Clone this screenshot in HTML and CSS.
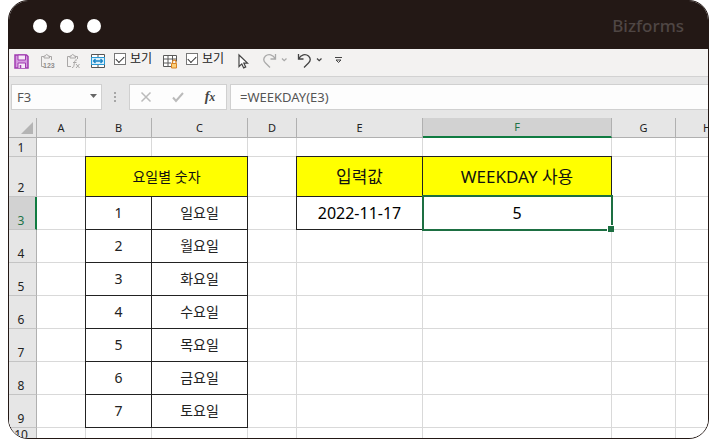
FILE: index.html
```html
<!doctype html>
<html lang="ko">
  <head>
    <meta charset="UTF-8" />
    <meta name="viewport" content="width=device-width, initial-scale=1.0" />
    <title>WEEKDAY | Bizforms</title>
    <link rel="stylesheet" href="styles.css">
  </head>

  <body>
    <div class="window">
      <header class="titlebar">
        <div class="lights">
          <span></span>
          <span></span>
          <span></span>
        </div>
        <div class="brand">Bizforms</div>
      </header>

      <div class="toolbar">
        <button aria-label="저장">
          <svg width="16" height="16" viewBox="0 0 16 16" fill="none">
            <path d="M1 2h11.500l1.500 1.500V15H1z" fill="#d59be0" stroke="#a03bb0" stroke-width="1.500" />
            <path d="M4 2h7.500v5H4z" fill="#f6e9f8" stroke="#a03bb0" />
            <path d="M4 15v-5h7.500v5" fill="#f6e9f8" stroke="#a03bb0" />
            <path d="M6.500 12v3" stroke="#a03bb0" stroke-width="1.500" />
          </svg>
        </button>
        <button aria-label="값 붙여넣기">
          <svg width="16" height="16" viewBox="0 0 16 16" fill="none" stroke="#a9a7a6">
            <path d="M5 13.500H2.500v-10H5M10 3.500h2.500V7" />
            <path d="M5 5V3h1.500c0-2 2.500-2 2.500 0h1.500v2z" />
            <text class="digits" x="4" y="15">123</text>
          </svg>
        </button>
        <button aria-label="수식 붙여넣기">
          <svg width="16" height="16" viewBox="0 0 16 16" fill="none" stroke="#a9a7a6">
            <path d="M7 13.500H3.500v-10H6M11 3.500h2.500V6" />
            <path d="M6 5V3h1.500c0-2 2.500-2 2.500 0h1.500v2z" />
            <path d="M13 7c-2-.6-2.300 1-2.700 3.500S9.700 15 8 14.500M9 9.500h3.500M12 11l3.500 4M15.500 11L12 15" />
          </svg>
        </button>
        <button aria-label="병합하고 가운데 맞춤">
          <svg width="16" height="16" viewBox="0 0 16 16" fill="none">
            <path d="M2.500 1.500h13v13h-13z" fill="#fff" stroke="#555" />
            <path d="M9 1v4M9 12v3" stroke="#555" />
            <path d="M2.500 4.500h13v7h-13z" fill="#d9effb" stroke="#2b9bd6" />
            <path d="M4.500 8h9M6.500 6l-2 2 2 2M11.500 6l2 2-2 2" stroke="#1b84c4" stroke-width="1.300" />
          </svg>
        </button>
        <label class="check"><input type="checkbox" checked />보기</label>
        <button aria-label="시트 보호">
          <svg width="16" height="16" viewBox="0 0 16 16" fill="none">
            <path d="M2.500 2.500h13v11h-13zM2.500 6h13M2.500 10h13M7 2.500v11M11.500 2.500v11" fill="#fff" stroke="#5a5a5a" />
            <path d="M10 8.500h6V16h-6z" fill="#f3f2f1" />
            <path d="M11.500 10.500V9c0-2.500 3.500-2.500 3.500 0v1.500" stroke="#d98324" stroke-width="1.200" />
            <path d="M10.500 10.500h5v4.500h-5z" fill="#fbcf7a" stroke="#d98324" />
          </svg>
        </button>
        <label class="check"><input type="checkbox" checked />보기</label>
        <button aria-label="개체 선택">
          <svg width="20" height="16" viewBox="0 0 20 16" fill="none" stroke="#444" stroke-width="1.200">
            <path d="M6 2v11.500l2.800-2.600 1.900 4 2-1-1.900-3.800H14.500z" fill="#fff" />
          </svg>
        </button>
        <button aria-label="다시 실행">
          <svg width="26" height="16" viewBox="0 0 26 16" fill="none" stroke="#aaa" stroke-width="1.300">
            <path d="M13.500 1v5h-5M13.300 5.800C11 1.500 6.500.3 3.500 3 1 5.500 1.500 8 3.500 10L8 14.500" />
            <path d="M20 5.500l2.200 2.200L24.500 5.500" />
          </svg>
        </button>
        <button aria-label="실행 취소">
          <svg width="26" height="16" viewBox="0 0 26 16" fill="none" stroke="#444" stroke-width="1.300">
            <path d="M1.500 1v5h5M1.700 5.800C4 1.500 8.500.3 11.500 3 14 5.500 13.500 8 11.500 10L7 14.500" />
            <path d="M20 5.500l2.200 2.200L24.500 5.500" />
          </svg>
        </button>
        <button aria-label="빠른 실행 도구 모음 사용자 지정">
          <svg width="14" height="16" viewBox="0 0 14 16" fill="none" stroke="#444">
            <path d="M3 4.500h7M4 7l2.500 2.500L9 7z" />
          </svg>
        </button>
      </div>

      <div class="formula-bar">
        <div class="name-box">
          <input type="text" value="F3" aria-label="이름 상자" />
          <button aria-label="이름 목록">
            <svg width="8" height="5" viewBox="0 0 8 5"><path d="M1 0h7L4.500 4z" fill="#666" /></svg>
          </button>
        </div>
        <svg class="grip" width="3" height="11" viewBox="0 0 3 11" fill="#a6a6a6">
          <path d="M0 0h2v2H0zM0 4h2v2H0zM0 8h2v2H0z" />
        </svg>
        <div class="formula-actions">
          <button aria-label="취소">
            <svg width="12" height="12" viewBox="0 0 12 12" stroke="#bbb" stroke-width="1.500">
              <path d="M1.500 1.500l9 9M10.500 1.500l-9 9" />
            </svg>
          </button>
          <button aria-label="입력">
            <svg width="12" height="12" viewBox="0 0 12 12" fill="none" stroke="#bbb" stroke-width="2">
              <path d="M1 6.500l3 3.500 7-8" />
            </svg>
          </button>
          <button class="fx" aria-label="함수 삽입">f<small>x</small></button>
        </div>
        <input class="formula" type="text" value="=WEEKDAY(E3)" aria-label="수식 입력줄" />
      </div>

      <main class="sheet">
        <table>
          <colgroup>
            <col class="col-num" />
            <col class="col-a" />
            <col class="col-b" />
            <col class="col-c" />
            <col class="col-d" />
            <col class="col-e" />
            <col class="col-f" />
            <col class="col-g" />
            <col class="col-h" />
          </colgroup>
          <thead>
            <tr>
              <th class="corner">
                <svg width="12" height="12" viewBox="0 0 12 12"><path d="M12 0v12H0z" fill="#b4b4b4" /></svg>
              </th>
              <th>A</th>
              <th>B</th>
              <th>C</th>
              <th>D</th>
              <th>E</th>
              <th class="active">F</th>
              <th>G</th>
              <th>H</th>
            </tr>
          </thead>
          <tbody>
            <tr class="short">
              <th>1</th>
              <td></td><td></td><td></td><td></td><td></td><td></td><td></td><td></td>
            </tr>
            <tr class="tall">
              <th>2</th>
              <td></td>
              <td class="box title" colspan="2">요일별 숫자</td>
              <td></td>
              <td class="box title large">입력값</td>
              <td class="box title large">WEEKDAY 사용</td>
              <td></td>
              <td></td>
            </tr>
            <tr>
              <th class="active">3</th>
              <td></td>
              <td class="box">1</td>
              <td class="box">일요일</td>
              <td></td>
              <td class="box value">2022-11-17</td>
              <td class="value selected">5</td>
              <td></td>
              <td></td>
            </tr>
            <tr>
              <th>4</th>
              <td></td>
              <td class="box">2</td>
              <td class="box">월요일</td>
              <td></td><td></td><td></td><td></td><td></td>
            </tr>
            <tr>
              <th>5</th>
              <td></td>
              <td class="box">3</td>
              <td class="box">화요일</td>
              <td></td><td></td><td></td><td></td><td></td>
            </tr>
            <tr>
              <th>6</th>
              <td></td>
              <td class="box">4</td>
              <td class="box">수요일</td>
              <td></td><td></td><td></td><td></td><td></td>
            </tr>
            <tr>
              <th>7</th>
              <td></td>
              <td class="box">5</td>
              <td class="box">목요일</td>
              <td></td><td></td><td></td><td></td><td></td>
            </tr>
            <tr>
              <th>8</th>
              <td></td>
              <td class="box">6</td>
              <td class="box">금요일</td>
              <td></td><td></td><td></td><td></td><td></td>
            </tr>
            <tr>
              <th>9</th>
              <td></td>
              <td class="box">7</td>
              <td class="box">토요일</td>
              <td></td><td></td><td></td><td></td><td></td>
            </tr>
            <tr class="last">
              <th>10</th>
              <td></td><td></td><td></td><td></td><td></td><td></td><td></td><td></td>
            </tr>
          </tbody>
        </table>
      </main>
    </div>
  </body>
</html>
```
FILE: styles.css
```css
* {
  box-sizing: border-box;
}
body {
  margin: 0;
  padding: 0 6px 1px 8px;
  height: 100vh;
  background: #fff;
  color: #222;
  font-family: "Noto Sans", "Noto Sans CJK KR", sans-serif;
  font-size: 13px;
}
button,
input {
  font: inherit;
  color: inherit;
  margin: 0;
  padding: 0;
  border: none;
  background: transparent;
}
button {
  display: flex;
  align-items: center;
  justify-content: center;
}
.window {
  display: flex;
  flex-direction: column;
  height: 100%;
  overflow: hidden;
  border: 1px solid #231815;
  border-radius: 20px;
  background: #e6e6e6;
}

/* Title bar */
.titlebar {
  display: flex;
  flex: none;
  align-items: center;
  justify-content: space-between;
  height: 48px;
  padding: 2px 24px 0 24px;
  background: #231815;
}
.lights {
  display: flex;
  gap: 13px;
}
.lights span {
  width: 14px;
  height: 14px;
  border-radius: 50%;
  background: #fff;
}
.brand {
  color: #4f4644;
  font-family: "Noto Sans", sans-serif;
  font-size: 17px;
  font-weight: 500;
  line-height: 20px;
}

/* Quick access toolbar */
.toolbar {
  display: flex;
  flex: none;
  align-items: center;
  gap: 9px;
  height: 28px;
  padding: 0 5px 4px;
  background: #f3f2f1;
  border-bottom: 1px solid #d2d2d2;
}
.check {
  display: flex;
  align-items: center;
  gap: 4px;
  width: 38px;
  padding-bottom: 3px;
  font-size: 12px;
  line-height: 16px;
  white-space: nowrap;
}
.check input {
  appearance: none;
  flex: none;
  width: 12px;
  height: 12px;
  border: 1px solid #777;
  background: #fff;
}
.check input:checked::before {
  content: "";
  display: block;
  width: 7px;
  height: 4px;
  margin: 2px 1px;
  border: solid #333;
  border-width: 0 0 1px 1px;
  transform: rotate(-45deg);
}
.digits {
  fill: #8f8d8c;
  stroke: none;
  font-family: "Liberation Sans", sans-serif;
  font-size: 7px;
  font-weight: bold;
}

/* Formula bar */
.formula-bar {
  display: flex;
  flex: none;
  align-items: center;
  height: 41px;
  padding: 0 0 1px 2px;
}
.name-box,
.formula-actions,
.formula {
  height: 26px;
  border: 1px solid #d0d0d0;
  background: #fdfdfd;
}
.name-box {
  display: flex;
  width: 91px;
  padding: 0 4px 0 5px;
}
.name-box input {
  flex: 1;
  min-width: 0;
  color: #555;
}
.name-box svg {
  margin-bottom: 2px;
}
.grip {
  margin: 0 12px;
}
.formula-actions {
  display: flex;
  width: 98px;
}
.formula-actions button {
  flex: 1;
}
.fx {
  color: #444;
  font-family: "Liberation Serif", serif;
  font-size: 14px;
  font-style: italic;
  font-weight: bold;
}
.fx small {
  font-size: 12px;
}
.formula {
  flex: 1;
  min-width: 0;
  margin-left: 3px;
  padding: 0 9px;
  border-right: none;
  color: #555;
}

/* Sheet */
.sheet {
  flex: 1;
  min-height: 0;
  overflow: hidden;
  background: #fff;
}
table {
  width: 730px;
  table-layout: fixed;
  border-spacing: 0;
}
.col-num {
  width: 28px;
}
.col-a,
.col-d {
  width: 49px;
}
.col-b {
  width: 66px;
}
.col-c {
  width: 96px;
}
.col-e {
  width: 126px;
}
.col-f {
  width: 189px;
}
.col-g {
  width: 64px;
}
.col-h {
  width: 63px;
}
tr {
  height: 33px;
}
.short {
  height: 19px;
}
.tall {
  height: 40px;
}
.last {
  height: 16px;
}
th,
td {
  padding: 0;
  border-right: 1px solid #d9d9d9;
  border-bottom: 1px solid #d9d9d9;
  line-height: 18px;
  text-align: center;
}
th {
  border-color: #b0b0b0;
  background: #e6e6e6;
  font-size: 11px;
  font-weight: normal;
}
thead tr {
  height: 20px;
}
thead th {
  line-height: 16px;
}
tbody th {
  border-bottom-color: #c4c4c4;
  font-size: 12px;
  line-height: 14px;
  padding: 0 3px 1px 0;
  vertical-align: bottom;
}
.corner {
  padding: 0 3px 3px 0;
  line-height: 0;
  text-align: right;
  vertical-align: bottom;
}
th.active {
  background: #d2d2d2;
  color: #217346;
}
thead .active {
  border-bottom: 2px solid #107c41;
}
tbody .active {
  border-right: 2px solid #107c41;
  padding-right: 2px;
}
td {
  font-size: 14px;
}
.box {
  border-color: #222;
  box-shadow: -1px 0 #222, 0 -1px #222, -1px -1px #222;
}
.title {
  background: #ff0;
  color: #111;
}
.large {
  font-size: 17px;
}
.value {
  color: #000;
  font-size: 16px;
}
.selected {
  position: relative;
}
.selected::before {
  content: "";
  position: absolute;
  inset: -2px -2px -2px -1px;
  border: 2px solid #1d6f42;
}
.selected::after {
  content: "";
  position: absolute;
  right: -3px;
  bottom: -3px;
  width: 6px;
  height: 6px;
  border: solid #fff;
  border-width: 1px 0 0 1px;
  background: #1d6f42;
}
```
